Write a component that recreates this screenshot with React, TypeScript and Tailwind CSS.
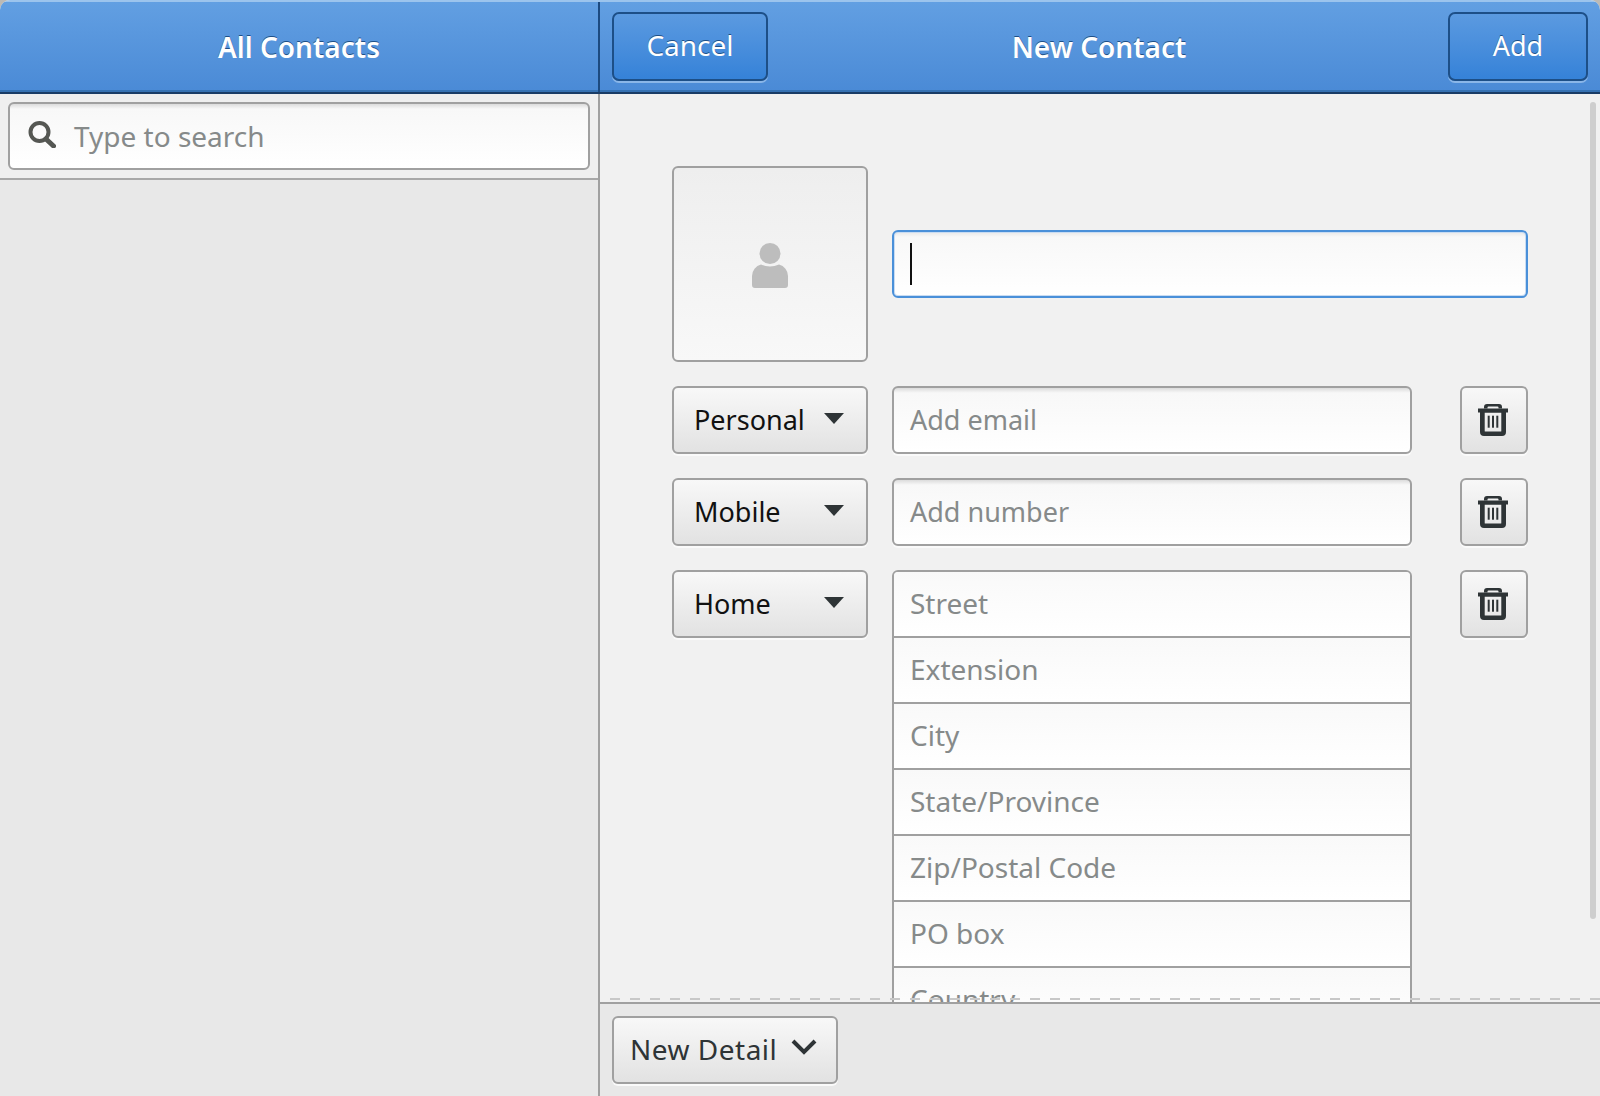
function TrashIcon() {
  return (
    <svg width="30" height="32" viewBox="0 0 30 32" fill="#2e3436">
      <path d="M6 4.5V3a3 3 0 0 1 3-3h12a3 3 0 0 1 3 3v1.5h-3.5V3.5a1 1 0 0 0-1-1h-9a1 1 0 0 0-1 1v1z" />
      <rect x="0" y="4.5" width="30" height="4" />
      <path fillRule="evenodd" d="M2 8h26v20a4 4 0 0 1-4 4H6a4 4 0 0 1-4-4zM6.7 8.5V27a.5.5 0 0 0 .5.5h15.6a.5.5 0 0 0 .5-.5V8.5z" />
      <rect x="9.7" y="11.7" width="2" height="12" />
      <rect x="14" y="11.7" width="2" height="12" />
      <rect x="18.3" y="11.7" width="2" height="12" />
    </svg>
  )
}

function HeaderButton({ label, className }: { label: string; className: string }) {
  return (
    <div className={`h-[69px] rounded-[7px] border-2 border-[#1d4f87] bg-gradient-to-b from-[#5b9ae0] to-[#3582d8] shadow-[0_2px_0_#8ab6e8] flex items-center justify-center text-white [text-shadow:0_-1px_0_#1d4f87] ${className}`}>
      {label}
    </div>
  )
}

function TypeSelect({ label }: { label: string }) {
  return (
    <div className="w-[196px] h-[68px] shrink-0 rounded-[6px] border-2 border-[#a0a0a0] bg-gradient-to-b from-[#f8f8f8] to-[#e2e2e2] shadow-[0_2px_0_#fafafa] flex items-center justify-between pl-5 pr-[22px] text-[27px]">
      <span>{label}</span>
      <svg width="20" height="11" viewBox="0 0 20 11" className="mb-1 shrink-0">
        <path d="M0 0h20L10 11z" fill="#2e3436" />
      </svg>
    </div>
  )
}

function TrashButton() {
  return (
    <div className="w-[68px] h-[68px] ml-6 shrink-0 rounded-[6px] border-2 border-[#a0a0a0] bg-gradient-to-b from-[#f8f8f8] to-[#e2e2e2] shadow-[0_2px_0_#fafafa] flex items-center justify-center pr-[2px]">
      <TrashIcon />
    </div>
  )
}

function TextField({ placeholder }: { placeholder: string }) {
  return (
    <div className="w-[520px] h-[68px] rounded-[6px] border-2 border-[#a0a0a0] bg-[linear-gradient(#dcdcdc,#f8f8f8_5px,#fbfbfb_50%,#ffffff)] shadow-[0_2px_0_#fafafa] flex items-center pl-4 text-[27px] text-[#868a8a]">
      {placeholder}
    </div>
  )
}

const addressParts = ['Street', 'Extension', 'City', 'State/Province', 'Zip/Postal Code', 'PO box', 'Country']

export default function App() {
  return (
    <div className="w-[1600px] h-[1096px] bg-[#bdbab5]">
      <div className="h-full flex flex-col overflow-hidden rounded-t-[10px] bg-[#f1f1f1] font-['Noto_Sans',sans-serif] text-[#111]">
        <header className="h-[94px] shrink-0 flex border-t-2 border-t-[#9cc4ed] border-b-2 border-b-[#1a3c66] bg-gradient-to-b from-[#629fe2] to-[#4a8ad6] shadow-[inset_0_-2px_0_#3672b3]">
          <div className="w-[598px] shrink-0 flex items-center justify-center text-[28px] font-semibold text-white [text-shadow:0_-1px_0_#1d4f87]">
            All Contacts
          </div>
          <div className="w-[2px] shrink-0 bg-[#1c4a80]" />
          <div className="flex-1 grid grid-cols-[1fr_auto_1fr] items-center pl-3 pr-3 pb-[2px]">
            <HeaderButton label="Cancel" className="w-[156px] pb-[3px] text-[28px]" />
            <span className="pt-[2px] -ml-[2px] text-[28px] font-semibold text-white [text-shadow:0_-1px_0_#1d4f87]">New Contact</span>
            <div className="flex justify-end">
              <HeaderButton label="Add" className="w-[140px] text-[27px]" />
            </div>
          </div>
        </header>

        <div className="flex-1 flex min-h-0">
          <aside className="w-[598px] shrink-0 bg-[#e8e8e8]">
            <div className="h-[86px] border-b-2 border-[#a8a8a8] bg-[#efefef] pt-2 px-2">
              <div className="h-[68px] rounded-[6px] border-2 border-[#a0a0a0] bg-[linear-gradient(#dcdcdc,#f8f8f8_5px,#fbfbfb_50%,#ffffff)] flex items-center pl-[18px] gap-[18px] text-[28px] text-[#868a8a]">
                <svg width="28" height="27" viewBox="0 0 28 27" fill="none" stroke="#555753" className="mb-1 shrink-0">
                  <circle cx="11.5" cy="11" r="9" strokeWidth="4" />
                  <path d="M18 18l7.5 7" strokeWidth="5" strokeLinecap="round" />
                </svg>
                Type to search
              </div>
            </div>
          </aside>

          <div className="w-[2px] shrink-0 bg-[#a0a0a0]" />

          <main className="flex-1 flex flex-col min-w-0">
            <div className="relative h-[908px] overflow-hidden">
              <div className="pl-[72px] pt-[72px] flex flex-col gap-6">
                <div className="flex items-center gap-6">
                  <div className="w-[196px] h-[196px] shrink-0 rounded-[6px] border-2 border-[#a0a0a0] bg-gradient-to-b from-[#eeeeee] to-[#f8f8f8] flex items-center justify-center">
                    <svg width="36" height="46" viewBox="0 0 36 46" fill="#bdbdbd" className="mt-1 blur-[0.5px]">
                      <circle cx="18" cy="10.5" r="10.5" />
                      <path d="M0 33a12 12 0 0 1 9-11.5q9 4 18 0a12 12 0 0 1 9 11.5v9a3 3 0 0 1-3 3H3a3 3 0 0 1-3-3z" />
                    </svg>
                  </div>
                  <div className="w-[636px] h-[68px] rounded-[6px] border-2 border-[#4a90d9] bg-[linear-gradient(#e8e8e8,#f8f8f8_5px,#fbfbfb_50%,#ffffff)] shadow-[inset_0_0_0_1px_#c9dcf2] flex items-center pl-4">
                    <div className="w-[2px] h-[42px] bg-[#111]" />
                  </div>
                </div>

                <div className="flex gap-6">
                  <TypeSelect label="Personal" />
                  <TextField placeholder="Add email" />
                  <TrashButton />
                </div>
                <div className="flex gap-6">
                  <TypeSelect label="Mobile" />
                  <TextField placeholder="Add number" />
                  <TrashButton />
                </div>
                <div className="flex items-start gap-6">
                  <TypeSelect label="Home" />
                  <div className="w-[520px] shrink-0 rounded-[6px] border-2 border-[#a0a0a0] overflow-hidden">
                    {addressParts.map((part) => (
                      <div
                        key={part}
                        className="h-[66px] border-b-2 border-[#a0a0a0] bg-gradient-to-b from-[#f9f9f9] to-white flex items-center pl-4 pb-[2px] text-[28px] text-[#868a8a]"
                      >
                        {part}
                      </div>
                    ))}
                  </div>
                  <TrashButton />
                </div>
              </div>

              <div className="absolute right-1 top-2 w-[6px] h-[817px] rounded-full bg-[#cecece]" />
              <div className="absolute left-[10px] right-0 bottom-[2px] h-[2px] bg-[repeating-linear-gradient(90deg,#c8c8c8_0,#c8c8c8_10px,transparent_10px,transparent_20px)]" />
            </div>

            <div className="flex-1 border-t-2 border-[#a0a0a0] bg-[#e8e8e8] pl-3 pt-3">
              <div className="w-[226px] h-[68px] rounded-[6px] border-2 border-[#a0a0a0] bg-gradient-to-b from-[#f8f8f8] to-[#e2e2e2] shadow-[0_2px_0_#fafafa] flex items-center justify-between pl-4 pr-[19px] pb-[2px] text-[28px] tracking-[0.5px] text-[#2e3436]">
                <span>New Detail</span>
                <svg width="26" height="16" viewBox="0 0 26 16" fill="none" stroke="#2e3436" strokeWidth="4" className="mb-1 shrink-0">
                  <path d="M2 2l11 11L24 2" />
                </svg>
              </div>
            </div>
          </main>
        </div>
      </div>
    </div>
  )
}
